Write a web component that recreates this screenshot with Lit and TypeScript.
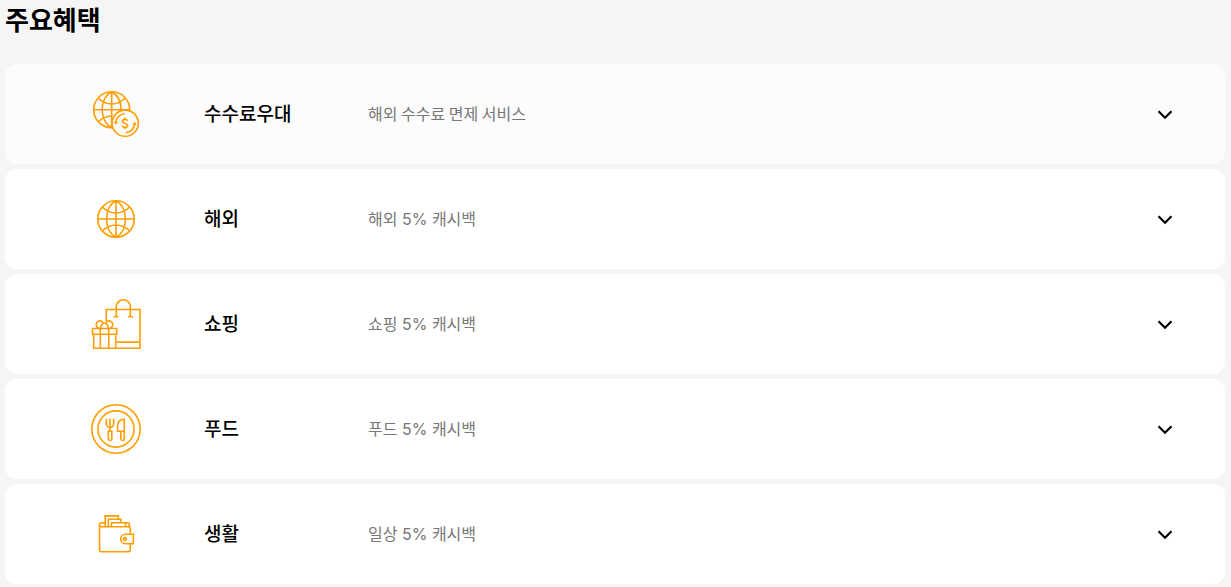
import { LitElement, html, svg, css } from "lit";
import { customElement, state } from "lit/decorators.js";

interface Benefit {
  icon: keyof typeof icons;
  title: string;
  summary: string;
  rate?: string;
  rest?: string;
}

const icons = {
  exchange: svg`
    <circle cx="20.7" cy="20.7" r="18"/>
    <path d="M20.7 2.7v36M2.7 20.7h36M20.7 2.7C8 9 8 32 20.7 38.7M20.7 2.7c6.500 4 9.600 11 9.300 18M7.200 9c8 8 19 8 27 0M7.200 32.500c4-3.500 8.500-5.500 14-5.500"/>
    <circle class="plate" cx="34.200" cy="34.200" r="13.100"/>
    <path d="M24.800 32.700a9.500 9.500 0 0 1 9-8M43.600 35.700a9.500 9.500 0 0 1-9 8"/>
    <path class="solid" d="M22.600 32.300l4.800.6-2.800 2.800zM45.800 36.100l-4.800-.6 2.800-2.800z"/>
    <path d="M34 28.500v2M34 38.300v2M36.600 31.700c-.6-.9-1.500-1.300-2.600-1.300-3.500 0-3.300 3 0 4 3.600 1.100 3.600 4 0 4-1.300 0-2.300-.5-2.900-1.500"/>`,
  globe: svg`
    <circle cx="25" cy="25" r="18.200"/>
    <path d="M25 6.800v36.400M6.800 25h36.400M25 6.800c-12.600 6.500-12.600 30 0 36.400M25 6.800c12.600 6.500 12.600 30 0 36.400M11.300 13c8 8 19.400 8 27.400 0M11.300 37c8-8 19.400-8 27.400 0"/>`,
  shopping: svg`
    <path d="M15.300 22.500V10.500H49v38.700H24.800M25.500 43.100H49M25.300 17.700V7.800a7 7 0 0 1 14 0v9.900M22.500 17.700h5M37.200 17.700h5"/>
    <path d="M1.500 29.500h24.200v5.700H1.500zM2.700 35.200v14h22v-14M9.300 29.500v19.700M17.700 29.500v19.700M8 29.200a3.700 3.700 0 1 1 4-5.600M19 29.200a3.700 3.700 0 1 0-4-5.600M9.500 29.500c.5-3.500 2-5.300 4-5.300s3.500 1.800 4 5.300"/>`,
  food: svg`
    <circle cx="25" cy="25" r="24.200"/>
    <circle cx="25" cy="25" r="18.100"/>
    <path d="M15.400 14.800v5a3.600 3.600 0 0 0 7.200 0v-5M19 14.800v12.400M17.300 27.300h3.500v7.500q0 1.700-1.700 1.700t-1.800-1.700zM33.300 15.200v12.100h-6.800v-4.500c0-4.600 2.300-7.600 6.800-7.600zM29.800 27.300h3.500v7.500q0 1.700-1.700 1.700t-1.800-1.700z"/>`,
  wallet: svg`
    <path d="M39.300 24.700V19.300q0-1.500-1.500-1.500H10.500q-2 0-2-2v24.700q0 2.200 2.200 2.200h26.400q2.200 0 2.200-2.200v-5.700M8.500 15.800q0-2 2-2h3.600M14.200 17.500V6.900h13.100v3.300M17.300 17.500v-7.200h12.600v3.200M20.500 17.500v-3.700h16.200q1.500 0 1.500 1.500v2.500M34.700 14v3.500"/>
    <path d="M42.300 25.200v9.500h-7.900a4.750 4.750 0 0 1 0-9.500z"/>
    <circle cx="33.800" cy="30" r="1.400"/>`,
};

const benefits: Benefit[] = [
  { icon: "exchange", title: "수수료우대", summary: "해외 수수료 면제 서비스" },
  { icon: "globe", title: "해외", summary: "해외", rate: "5%", rest: "캐시백" },
  { icon: "shopping", title: "쇼핑", summary: "쇼핑", rate: "5%", rest: "캐시백" },
  { icon: "food", title: "푸드", summary: "푸드", rate: "5%", rest: "캐시백" },
  { icon: "wallet", title: "생활", summary: "일상", rate: "5%", rest: "캐시백" },
];

@customElement("app-root")
export class AppRoot extends LitElement {
  static styles = css`
    :host {
      display: block;
      box-sizing: border-box;
      min-height: 100vh;
      padding: 0 6px 3px 5px;
      background: #f5f5f5;
      color: #000;
      font-family: "Noto Sans CJK KR", sans-serif;
    }
    .heading {
      margin: 0 0 26px;
      font-size: 26px;
      line-height: 38px;
      font-weight: 700;
    }
    .list {
      display: flex;
      flex-direction: column;
      gap: 5px;
      margin: 0;
      padding: 0;
      list-style: none;
    }
    .card {
      display: grid;
      grid-template-columns: 50px 101px 1fr 16px;
      align-items: center;
      column-gap: 63px;
      box-sizing: border-box;
      width: 100%;
      min-height: 100px;
      padding: 0 52px 0 86px;
      border: 0;
      border-radius: 12px;
      background: #fff;
      color: inherit;
      font: inherit;
      text-align: left;
      cursor: pointer;
    }
    .card.active {
      background: #fcfcfc;
    }
    .icon {
      display: block;
      width: 50px;
      height: 50px;
      fill: none;
      stroke: #ff9d00;
      stroke-width: 1.6;
    }
    .icon .plate {
      fill: #fcfcfc;
    }
    .icon .solid {
      fill: #ff9d00;
      stroke: none;
    }
    .title,
    .summary {
      padding-bottom: 2px;
      line-height: 28px;
    }
    .title {
      font-size: 19px;
      font-weight: 500;
    }
    .summary {
      font-size: 16px;
      font-weight: 400;
      color: #777;
    }
    .rate {
      font-family: Inter, sans-serif;
      font-size: 16px;
      white-space: pre;
    }
    .chevron {
      display: block;
      width: 16px;
      height: 16px;
      fill: none;
      stroke: #000;
      stroke-width: 2.2;
    }
  `;

  @state() private active = 0;

  render() {
    return html`
      <h2 class="heading">주요혜택</h2>
      <ul class="list">
        ${benefits.map(
          (b, i) => html`<li>
            <button
              type="button"
              class="card ${i === this.active ? "active" : ""}"
              @click=${() => (this.active = i)}
            >
              <svg class="icon" viewBox="0 0 50 50" aria-hidden="true">${icons[b.icon]}</svg>
              <span class="title">${b.title}</span>
              <span class="summary">${b.summary}${b.rate ? html`<span class="rate"> ${b.rate} </span>${b.rest}` : ""}</span>
              <svg class="chevron" viewBox="0 0 16 16" aria-hidden="true"><path d="M1.500 5.300l6.500 6.500 6.500-6.500"/></svg>
            </button>
          </li>`
        )}
      </ul>
    `;
  }
}
